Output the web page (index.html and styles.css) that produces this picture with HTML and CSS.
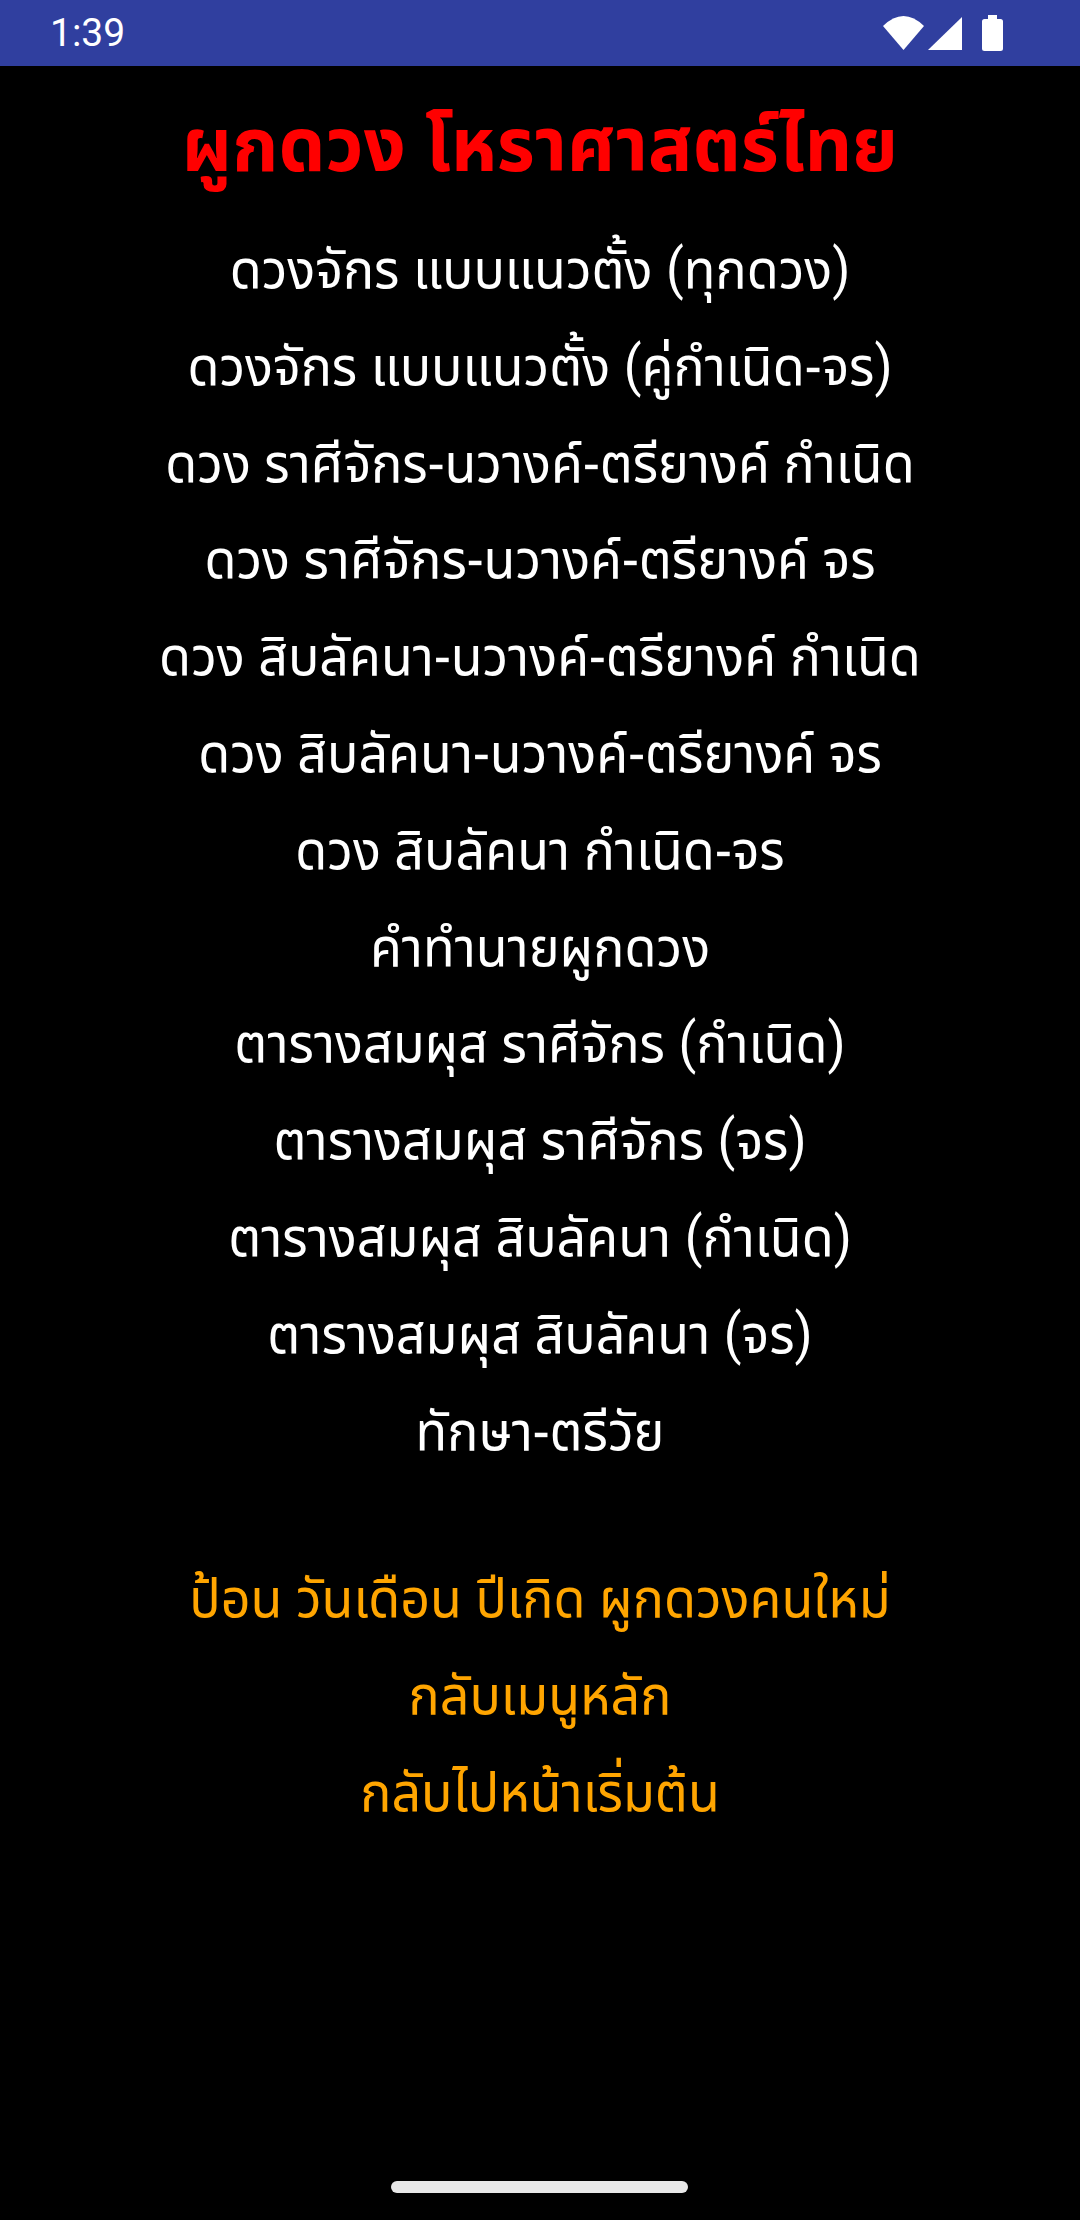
FILE: index.html
```html
<!DOCTYPE html>
<html lang="th">
  <head>
    <meta charset="UTF-8" />
    <title>ผูกดวง โหราศาสตร์ไทย</title>
    <link rel="stylesheet" href="styles.css">
  </head>
  <body>
    <div class="status-bar">
      <span class="clock">1:39</span>
      <div class="status-icons">
        <svg class="wifi" width="41" height="34" viewBox="0 0 41 34"><path d="M20.5 34 L0 10 Q20.5 -10 41 10 Z" fill="#fff"/></svg>
        <svg class="signal" width="34" height="33" viewBox="0 0 34 33"><path d="M0 33 L34 0 V33 Z" fill="#fff"/></svg>
        <svg class="battery" width="21" height="36" viewBox="0 0 21 36"><path d="M6 0 H15 V4 H18.5 Q21 4 21 6.5 V33.5 Q21 36 18.5 36 H2.5 Q0 36 0 33.5 V6.5 Q0 4 2.5 4 H6 Z" fill="#fff"/></svg>
      </div>
    </div>
    <div class="menu">
      <h1 class="title">ผูกดวง โหราศาสตร์ไทย</h1>
      <a class="item">ดวงจักร แบบแนวตั้ง (ทุกดวง)</a>
      <a class="item">ดวงจักร แบบแนวตั้ง (คู่กำเนิด-จร)</a>
      <a class="item">ดวง ราศีจักร-นวางค์-ตรียางค์ กำเนิด</a>
      <a class="item">ดวง ราศีจักร-นวางค์-ตรียางค์ จร</a>
      <a class="item">ดวง สิบลัคนา-นวางค์-ตรียางค์ กำเนิด</a>
      <a class="item">ดวง สิบลัคนา-นวางค์-ตรียางค์ จร</a>
      <a class="item">ดวง สิบลัคนา กำเนิด-จร</a>
      <a class="item">คำทำนายผูกดวง</a>
      <a class="item">ตารางสมผุส ราศีจักร (กำเนิด)</a>
      <a class="item">ตารางสมผุส ราศีจักร (จร)</a>
      <a class="item">ตารางสมผุส สิบลัคนา (กำเนิด)</a>
      <a class="item">ตารางสมผุส สิบลัคนา (จร)</a>
      <a class="item">ทักษา-ตรีวัย</a>
      <a class="item orange first">ป้อน วันเดือน ปีเกิด ผูกดวงคนใหม่</a>
      <a class="item orange">กลับเมนูหลัก</a>
      <a class="item orange">กลับไปหน้าเริ่มต้น</a>
    </div>
    <div class="home-pill"></div>
  </body>
</html>
```

FILE: styles.css
```css
html,
body {
  height: 100%;
  margin: 0;
}
body {
  background-color: #000;
  position: relative;
  overflow: hidden;
  font-family: "Noto Sans Thai UI", "Droid Sans Thai", Roboto, sans-serif;
}
.status-bar {
  height: 66px;
  background-color: #303f9f;
  display: flex;
  justify-content: space-between;
  align-items: center;
  padding: 0 77px 0 50px;
  color: #fff;
}
.clock {
  font-family: Roboto, sans-serif;
  font-size: 39px;
}
.status-icons {
  display: flex;
  align-items: center;
  gap: 4px;
}
.battery {
  margin-left: 16px;
}
.menu {
  display: flex;
  flex-direction: column;
  align-items: center;
  padding-top: 30px;
}
.title {
  margin: 0 0 32px;
  font-size: 74px;
  line-height: 90px;
  font-weight: bold;
  color: #f00;
  /* the installed thai font is a bit squatter than the one in the shot */
  transform: scaleY(1.08);
}
.item {
  font-size: 52px;
  line-height: 96.8px;
  color: #fff;
  transform: scaleY(1.08);
}
.orange {
  color: #ffa500;
}
.first {
  margin-top: 71px;
}
.home-pill {
  position: absolute;
  left: 391px;
  top: 2181px;
  width: 297px;
  height: 12px;
  border-radius: 6px;
  background-color: #e8e8e8;
}
```
